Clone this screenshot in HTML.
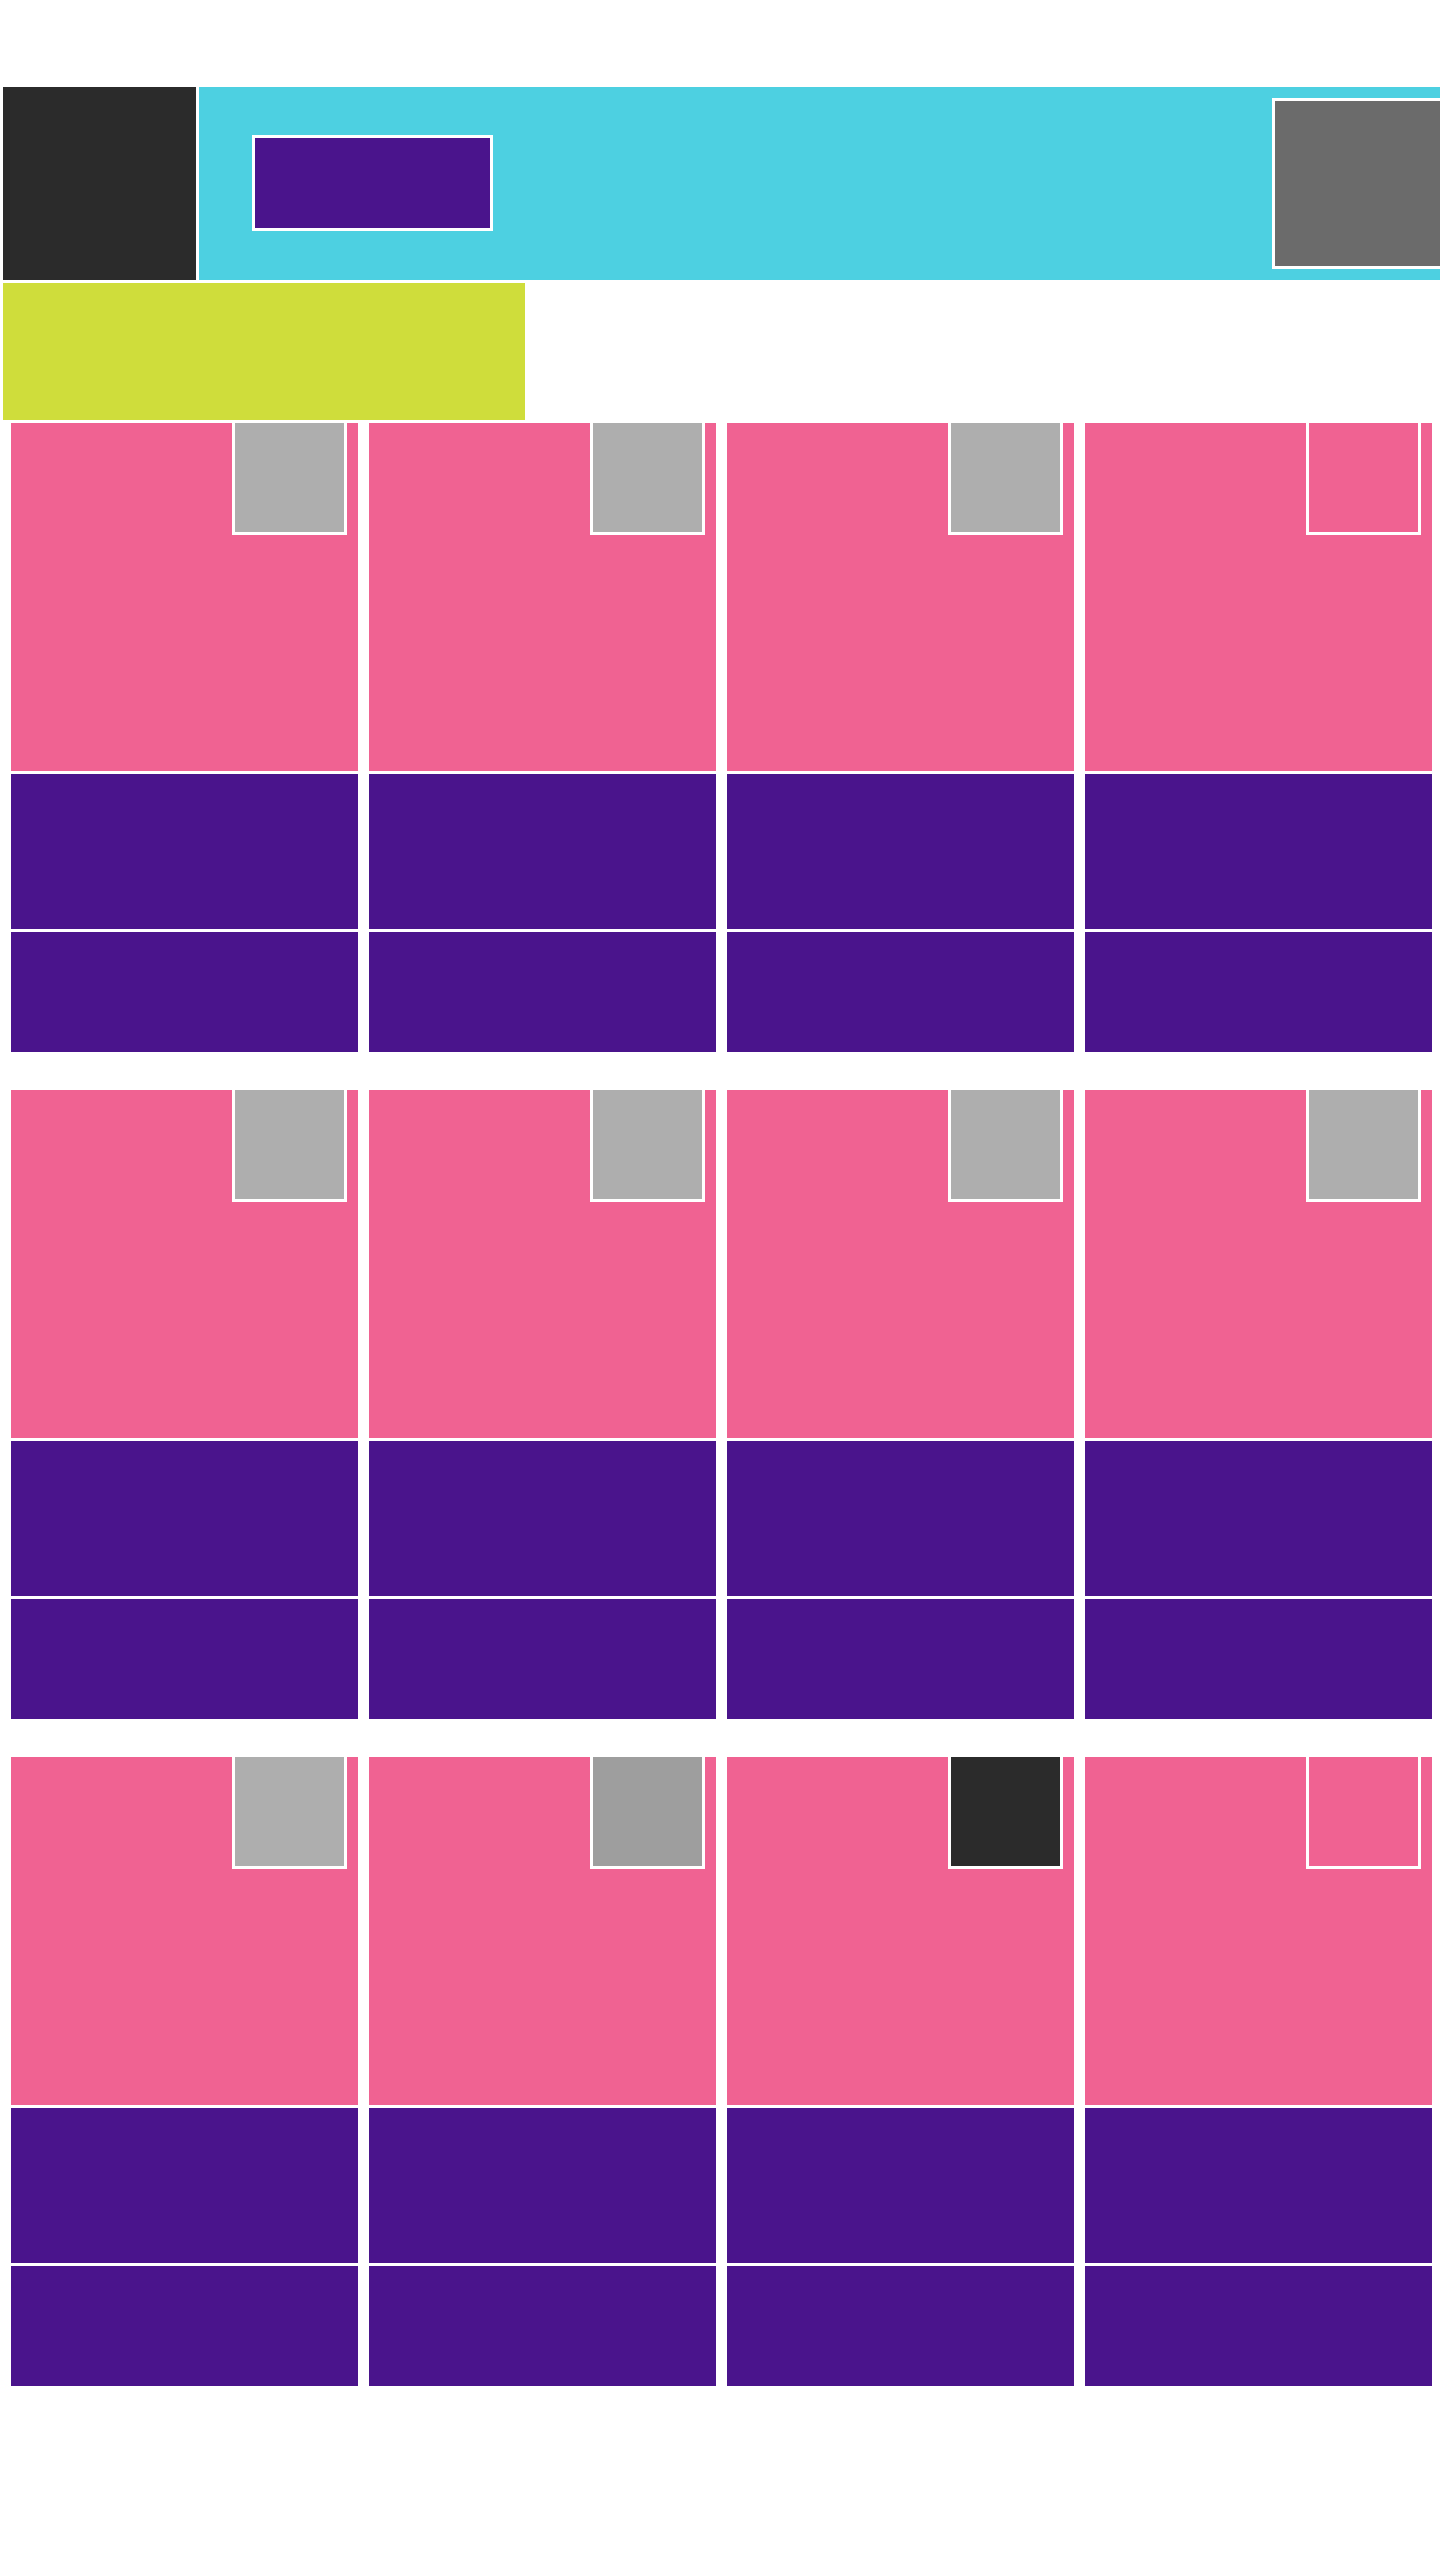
<!DOCTYPE html>
<html><head><meta charset="utf-8"><style>
*{margin:0;padding:0;box-sizing:border-box}
body{width:1440px;height:2560px;background:#fff;position:relative;overflow:hidden;font-family:"Liberation Sans",sans-serif}
div{position:absolute}
.pk{background:#F06292}
.pu{background:#4A148C}
.sq{border:3px solid #fff;border-top:none}
</style></head><body>
<div style="left:3px;top:87px;width:193px;height:193px;background:#2B2B2B"></div>
<div style="left:199px;top:87px;width:1241px;height:193px;background:#4DD0E1"></div>
<div style="left:252px;top:135px;width:241px;height:96px;background:#4A148C;border:3px solid #fff"></div>
<div style="left:1272px;top:98px;width:168px;height:171px;background:#6B6B6B;border:3px solid #fff;border-right:none"></div>
<div style="left:3px;top:283px;width:522px;height:137px;background:#CFDD3B"></div>

<!-- row 1 -->
<div class="pk" style="left:11px;top:423px;width:347px;height:348px"></div>
<div class="pk" style="left:369px;top:423px;width:347px;height:348px"></div>
<div class="pk" style="left:727px;top:423px;width:347px;height:348px"></div>
<div class="pk" style="left:1085px;top:423px;width:347px;height:348px"></div>
<div class="sq" style="left:232px;top:423px;width:115px;height:112px;background:#AEAEAE"></div>
<div class="sq" style="left:590px;top:423px;width:115px;height:112px;background:#AEAEAE"></div>
<div class="sq" style="left:948px;top:423px;width:115px;height:112px;background:#AEAEAE"></div>
<div class="sq" style="left:1306px;top:423px;width:115px;height:112px"></div>
<div class="pu" style="left:11px;top:774px;width:347px;height:155px"></div>
<div class="pu" style="left:369px;top:774px;width:347px;height:155px"></div>
<div class="pu" style="left:727px;top:774px;width:347px;height:155px"></div>
<div class="pu" style="left:1085px;top:774px;width:347px;height:155px"></div>
<div class="pu" style="left:11px;top:932px;width:347px;height:120px"></div>
<div class="pu" style="left:369px;top:932px;width:347px;height:120px"></div>
<div class="pu" style="left:727px;top:932px;width:347px;height:120px"></div>
<div class="pu" style="left:1085px;top:932px;width:347px;height:120px"></div>

<!-- row 2 -->
<div class="pk" style="left:11px;top:1090px;width:347px;height:348px"></div>
<div class="pk" style="left:369px;top:1090px;width:347px;height:348px"></div>
<div class="pk" style="left:727px;top:1090px;width:347px;height:348px"></div>
<div class="pk" style="left:1085px;top:1090px;width:347px;height:348px"></div>
<div class="sq" style="left:232px;top:1090px;width:115px;height:112px;background:#AEAEAE"></div>
<div class="sq" style="left:590px;top:1090px;width:115px;height:112px;background:#AEAEAE"></div>
<div class="sq" style="left:948px;top:1090px;width:115px;height:112px;background:#AEAEAE"></div>
<div class="sq" style="left:1306px;top:1090px;width:115px;height:112px;background:#AEAEAE"></div>
<div class="pu" style="left:11px;top:1441px;width:347px;height:155px"></div>
<div class="pu" style="left:369px;top:1441px;width:347px;height:155px"></div>
<div class="pu" style="left:727px;top:1441px;width:347px;height:155px"></div>
<div class="pu" style="left:1085px;top:1441px;width:347px;height:155px"></div>
<div class="pu" style="left:11px;top:1599px;width:347px;height:120px"></div>
<div class="pu" style="left:369px;top:1599px;width:347px;height:120px"></div>
<div class="pu" style="left:727px;top:1599px;width:347px;height:120px"></div>
<div class="pu" style="left:1085px;top:1599px;width:347px;height:120px"></div>

<!-- row 3 -->
<div class="pk" style="left:11px;top:1757px;width:347px;height:348px"></div>
<div class="pk" style="left:369px;top:1757px;width:347px;height:348px"></div>
<div class="pk" style="left:727px;top:1757px;width:347px;height:348px"></div>
<div class="pk" style="left:1085px;top:1757px;width:347px;height:348px"></div>
<div class="sq" style="left:232px;top:1757px;width:115px;height:112px;background:#AEAEAE"></div>
<div class="sq" style="left:590px;top:1757px;width:115px;height:112px;background:#9E9E9E"></div>
<div class="sq" style="left:948px;top:1757px;width:115px;height:112px;background:#2B2B2B"></div>
<div class="sq" style="left:1306px;top:1757px;width:115px;height:112px"></div>
<div class="pu" style="left:11px;top:2108px;width:347px;height:155px"></div>
<div class="pu" style="left:369px;top:2108px;width:347px;height:155px"></div>
<div class="pu" style="left:727px;top:2108px;width:347px;height:155px"></div>
<div class="pu" style="left:1085px;top:2108px;width:347px;height:155px"></div>
<div class="pu" style="left:11px;top:2266px;width:347px;height:120px"></div>
<div class="pu" style="left:369px;top:2266px;width:347px;height:120px"></div>
<div class="pu" style="left:727px;top:2266px;width:347px;height:120px"></div>
<div class="pu" style="left:1085px;top:2266px;width:347px;height:120px"></div>
</body></html>
